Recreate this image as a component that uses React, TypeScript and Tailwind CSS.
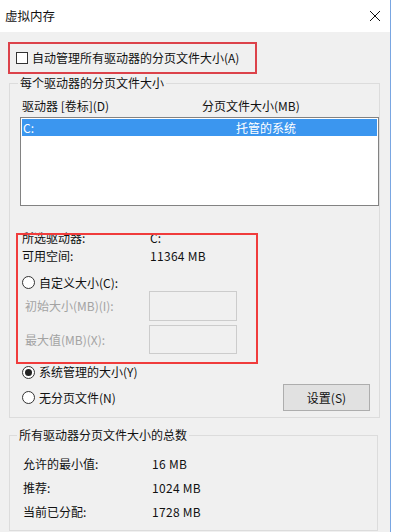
import React from "react";

const FONT = "font-['Microsoft_YaHei','Noto_Sans_CJK_SC',sans-serif]";

function CheckBox() {
  return (
    <span className="inline-block h-[12px] w-[12px] shrink-0 border border-[#333333] bg-white" />
  );
}

function Radio({ checked = false }: { checked?: boolean }) {
  return (
    <span className="flex h-[13px] w-[13px] shrink-0 items-center justify-center rounded-full border border-[#333333] bg-white">
      {checked && <span className="h-[7px] w-[7px] rounded-full bg-[#222222]" />}
    </span>
  );
}

function CloseIcon() {
  return (
    <svg width="12" height="12" viewBox="0 0 12 12">
      <path d="M1 1 L11 11 M11 1 L1 11" stroke="#111111" strokeWidth="1" />
    </svg>
  );
}

export default function App() {
  const totals = [
    { label: "允许的最小值:", value: "16 MB" },
    { label: "推荐:", value: "1024 MB" },
    { label: "当前已分配:", value: "1728 MB" },
  ];

  return (
    <div className={`flex h-[532px] w-[394px] bg-white text-[12px] text-[#111111] ${FONT}`}>
      <div className="flex w-[391px] flex-col border-r border-[#79a6e2]">
        {/* title bar */}
        <div className="flex h-[32px] shrink-0 items-center justify-between bg-white pl-[5px] pr-[9px]">
          <span className="text-[12.5px] leading-[16px]">虚拟内存</span>
          <CloseIcon />
        </div>

        {/* body */}
        <div className="relative flex-1 overflow-hidden bg-[#f0f0f0]">
          <div className="ml-[8px] mt-[10px] flex h-[32px] w-[249px] items-center gap-[4px] border-2 border-[#dc424a] pl-[6px]">
            <CheckBox />
            <span className="leading-[16px]">自动管理所有驱动器的分页文件大小(A)</span>
          </div>

          {/* per drive group */}
          <fieldset className="ml-[9px] mt-[1px] w-[369px] border border-[#dcdcdc] pb-[6px]">
            <legend className="ml-[8px] px-[2px] leading-[16px]">每个驱动器的分页文件大小</legend>

            <div className="mt-[7px] flex h-[16px] items-center leading-[16px]">
              <span className="ml-[12px] w-[180px]">驱动器 [卷标](D)</span>
              <span>分页文件大小(MB)</span>
            </div>

            <div className="ml-[10px] mt-[3px] h-[89px] w-[359px] border border-[#828282] bg-white p-[1px]">
              <div className="flex h-[17px] items-center bg-[#3b96ef] text-white">
                <span className="ml-[1px] w-[213px]">C:</span>
                <span>托管的系统</span>
              </div>
            </div>

            <div className="mt-[23px] flex h-[18px] items-center">
              <span className="ml-[12px] w-[128px]">所选驱动器:</span>
              <span>C:</span>
            </div>
            <div className="flex h-[18px] items-center">
              <span className="ml-[12px] w-[128px]">可用空间:</span>
              <span className="tracking-[0.3px]">11364 MB</span>
            </div>

            <div className="mt-[9px] flex h-[17px] items-center gap-[4px] pl-[12px]">
              <Radio />
              <span>自定义大小(C):</span>
            </div>
            <div className="flex h-[30px] items-center text-[#a3a3a3]">
              <span className="ml-[15px] w-[124px]">初始大小(MB)(I):</span>
              <span className="h-[30px] w-[88px] border border-[#cccccc] bg-[#f0f0f0]" />
            </div>
            <div className="mt-[4px] flex h-[29px] items-center text-[#a3a3a3]">
              <span className="ml-[15px] w-[124px]">最大值(MB)(X):</span>
              <span className="h-[29px] w-[88px] border border-[#cccccc] bg-[#f0f0f0]" />
            </div>

            <div className="mt-[9px] flex h-[18px] items-center gap-[4px] pl-[12px]">
              <Radio checked />
              <span>系统管理的大小(Y)</span>
            </div>
            <div className="mt-[3px] flex h-[27px] items-center pl-[12px]">
              <div className="flex flex-1 items-center gap-[4px]">
                <Radio />
                <span>无分页文件(N)</span>
              </div>
              <button className="mr-[9px] h-[27px] w-[87px] border border-[#adadad] bg-[#e1e1e1] text-[12px]">
                设置(S)
              </button>
            </div>
          </fieldset>

          {/* totals group */}
          <fieldset className="ml-[9px] mt-[9px] w-[369px] border border-[#dcdcdc] pb-[6px]">
            <legend className="ml-[7px] px-[2px] leading-[16px]">所有驱动器分页文件大小的总数</legend>
            <div className="mt-[9px] flex flex-col">
              {totals.map((t) => (
                <div key={t.label} className="flex h-[24px] items-center">
                  <span className="ml-[13px] w-[129px]">{t.label}</span>
                  <span className="tracking-[0.3px]">{t.value}</span>
                </div>
              ))}
            </div>
          </fieldset>

          {/* annotation box */}
          <div className="pointer-events-none absolute left-[16px] top-[201px] h-[131px] w-[242px] border-2 border-[#f03c3c]" />
        </div>
      </div>
    </div>
  );
}
